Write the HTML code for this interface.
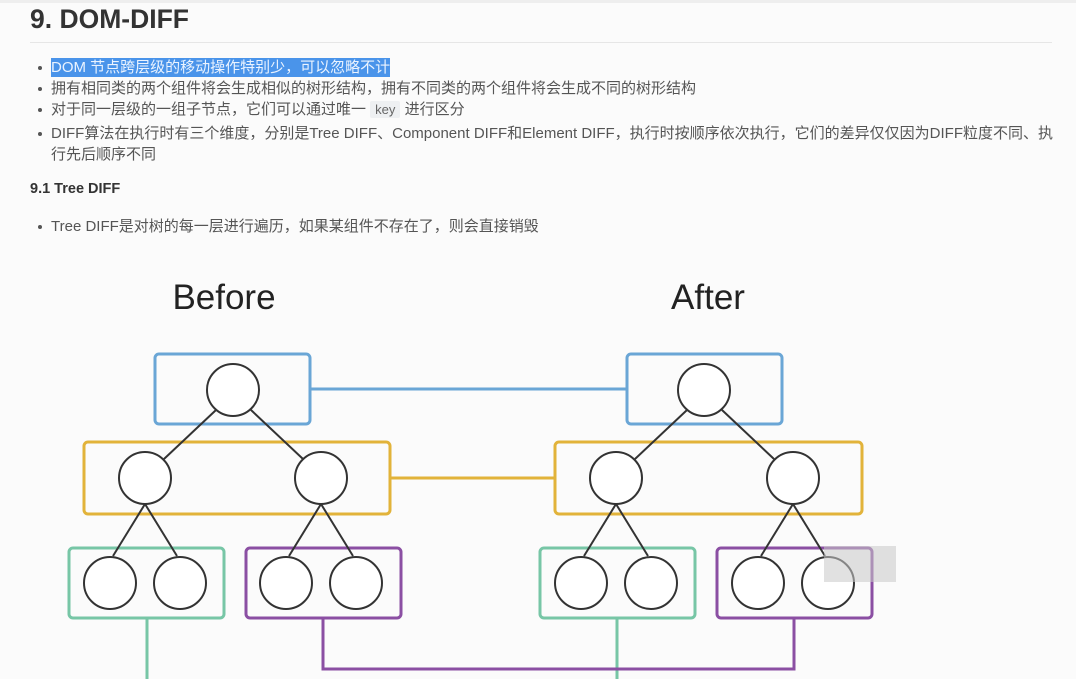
<!DOCTYPE html>
<html><head><meta charset="utf-8"><style>
body{margin:0;width:1076px;height:679px;background:#fbfbfb;overflow:hidden;position:relative;font-family:"Liberation Sans","Noto Sans CJK SC",sans-serif;color:#4a4a4a}
.a{position:absolute;white-space:nowrap}
h1{position:absolute;left:30px;top:4px;margin:0;font-size:26.5px;font-weight:bold;color:#333}
.hr{position:absolute;left:30px;top:42px;width:1022px;height:1px;background:#e6e6e6}
.li{position:absolute;left:51px;font-size:15px;color:#555;white-space:nowrap;line-height:19px}
.li:before{content:"";position:absolute;left:-13px;top:8px;width:4px;height:4px;border-radius:50%;background:#555}
.hl{background:#4a94ea;color:#eaf3ff;display:inline-block;height:19px}
code{background:#eef0f2;font-family:"Liberation Sans",sans-serif;font-size:13px;padding:1px 5px;color:#666;border-radius:2px}
</style></head><body>
<div style="position:absolute;left:0;top:0;width:1076px;height:3px;background:#eee"></div>
<h1>9. DOM-DIFF</h1>
<div class="hr"></div>
<div class="li" style="top:58px"><span class="hl">DOM 节点跨层级的移动操作特别少，可以忽略不计</span></div>
<div class="li" style="top:79px">拥有相同类的两个组件将会生成相似的树形结构，拥有不同类的两个组件将会生成不同的树形结构</div>
<div class="li" style="top:100px">对于同一层级的一组子节点，它们可以通过唯一 <code>key</code> 进行区分</div>
<div class="li" style="top:124px">DIFF算法在执行时有三个维度，分别是Tree DIFF、Component DIFF和Element DIFF，执行时按顺序依次执行，它们的差异仅仅因为DIFF粒度不同、执</div>
<div class="a" style="left:51px;top:145px;font-size:15px;line-height:19px;color:#555">行先后顺序不同</div>
<div class="a" style="left:30px;top:181px;font-size:14.5px;font-weight:bold;color:#333">9.1 Tree DIFF</div>
<div class="li" style="top:217px">Tree DIFF是对树的每一层进行遍历，如果某组件不存在了，则会直接销毁</div>
<svg width="1076" height="679" style="position:absolute;left:0;top:0" fill="none" stroke-width="3">
<text x="224" y="309" font-size="35" fill="#222" stroke="none" text-anchor="middle" font-family="Liberation Sans">Before</text>
<text x="708" y="309" font-size="35" fill="#222" stroke="none" text-anchor="middle" font-family="Liberation Sans">After</text>
<g stroke="#6aa6d6"><rect x="155" y="354" width="155" height="70" rx="4"/><rect x="627" y="354" width="155" height="70" rx="4"/><line x1="310" y1="389" x2="627" y2="389"/></g>
<g stroke="#e2b33a"><rect x="84" y="442" width="306" height="72" rx="4"/><rect x="555" y="442" width="307" height="72" rx="4"/><line x1="390" y1="478" x2="555" y2="478"/></g>
<g stroke="#77c6a6"><rect x="69" y="548" width="155" height="70" rx="4"/><rect x="540" y="548" width="155" height="70" rx="4"/><line x1="147" y1="618" x2="147" y2="679"/><line x1="617" y1="618" x2="617" y2="679"/></g>
<g stroke="#8b4fa3"><rect x="246" y="548" width="155" height="70" rx="4"/><rect x="717" y="548" width="155" height="70" rx="4"/><polyline points="323,618 323,669 794,669 794,618"/></g>
<g stroke="#333" stroke-width="2">
<line x1="216" y1="410" x2="164" y2="459"/><line x1="251" y1="410" x2="303" y2="459"/>
<line x1="687" y1="410" x2="635" y2="459"/><line x1="722" y1="410" x2="774" y2="459"/>
<line x1="145" y1="504" x2="113" y2="556"/><line x1="145" y1="504" x2="177" y2="556"/>
<line x1="321" y1="504" x2="289" y2="556"/><line x1="321" y1="504" x2="353" y2="556"/>
<line x1="616" y1="504" x2="584" y2="556"/><line x1="616" y1="504" x2="648" y2="556"/>
<line x1="793" y1="504" x2="761" y2="556"/><line x1="793" y1="504" x2="825" y2="556"/>
<circle cx="233" cy="390" r="26" fill="#fff"/><circle cx="704" cy="390" r="26" fill="#fff"/>
<circle cx="145" cy="478" r="26" fill="#fff"/><circle cx="321" cy="478" r="26" fill="#fff"/>
<circle cx="616" cy="478" r="26" fill="#fff"/><circle cx="793" cy="478" r="26" fill="#fff"/>
<circle cx="110" cy="583" r="26" fill="#fff"/><circle cx="180" cy="583" r="26" fill="#fff"/>
<circle cx="286" cy="583" r="26" fill="#fff"/><circle cx="356" cy="583" r="26" fill="#fff"/>
<circle cx="581" cy="583" r="26" fill="#fff"/><circle cx="651" cy="583" r="26" fill="#fff"/>
<circle cx="758" cy="583" r="26" fill="#fff"/><circle cx="828" cy="583" r="26" fill="#fff"/>
</g>
<rect x="824" y="546" width="72" height="36" fill="#c8c8c8" fill-opacity="0.55" stroke="none"/>
</svg>
</body></html>
